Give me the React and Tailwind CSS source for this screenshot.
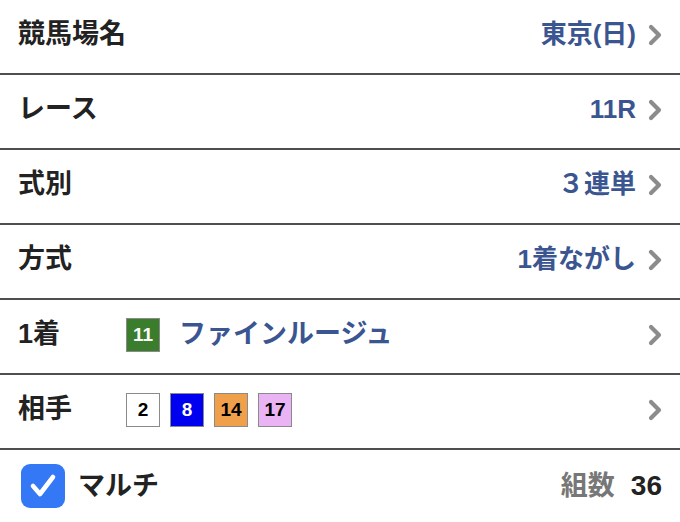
import React from "react";

const font = { fontFamily: '"Liberation Sans", "Noto Sans CJK JP", sans-serif' };

function Chevron() {
  return (
    <svg width="16" height="22" viewBox="0 0 16 22" className="shrink-0">
      <polyline points="4,3 12,11 4,19" fill="none" stroke="#8c8c8c" strokeWidth="4.2" strokeLinecap="round" strokeLinejoin="round" />
    </svg>
  );
}

function Num({ n, cls }) {
  return (
    <div className={`w-[34px] h-[34px] flex items-center justify-center border-[1.5px] border-[#8a8a8a] text-[19px] font-bold leading-none ${cls}`}>
      {n}
    </div>
  );
}

function Row({ children, last }) {
  return (
    <div className={`flex items-center pl-[18px] pr-[17px] ${last ? "h-[72px]" : "h-[75px] pb-[4px] border-b-2 border-[#4e4e4e]"}`}>
      {children}
    </div>
  );
}

const rows = [
  { label: "競馬場名", value: "東京(日)" },
  { label: "レース", value: "11R" },
  { label: "式別", value: "３連単" },
  { label: "方式", value: "1着ながし" },
];

export default function App() {
  return (
    <div className="w-[680px] h-[522px] bg-white text-[#222] overflow-hidden" style={font}>
      {rows.map((r) => (
        <Row key={r.label}>
          <div className="text-[27px] font-bold">{r.label}</div>
          <div className="ml-auto flex items-center gap-[11px]">
            <span className="text-[26px] font-bold text-[#3b5590]">{r.value}</span>
            <Chevron />
          </div>
        </Row>
      ))}

      <Row>
        <div className="w-[108px] text-[27px] font-bold">1着</div>
        <Num n="11" cls="bg-[#3a7d2c] text-white" />
        <span className="ml-[19px] text-[27px] font-bold text-[#3b5590]">ファインルージュ</span>
        <div className="ml-auto">
          <Chevron />
        </div>
      </Row>

      <Row>
        <div className="w-[108px] text-[27px] font-bold">相手</div>
        <div className="flex items-center gap-[10px]">
          <Num n="2" cls="bg-white text-black" />
          <Num n="8" cls="bg-[#0000f0] text-white" />
          <Num n="14" cls="bg-[#f0a04a] text-black" />
          <Num n="17" cls="bg-[#eab4f4] text-black" />
        </div>
        <div className="ml-auto">
          <Chevron />
        </div>
      </Row>

      <Row last>
        <div className="ml-[3px] w-[44px] h-[44px] rounded-[9px] bg-[#3478f6] flex items-center justify-center">
          <svg width="32" height="32" viewBox="0 0 32 32">
            <polyline points="6,16 13,24 26,7" fill="none" stroke="white" strokeWidth="4.6" strokeLinecap="round" strokeLinejoin="round" />
          </svg>
        </div>
        <span className="ml-[13px] text-[27px] font-bold">マルチ</span>
        <div className="ml-auto flex items-center gap-[16px] pr-[1px]">
          <span className="text-[27px] font-bold text-[#777]">組数</span>
          <span className="text-[28px] font-bold text-[#222]">36</span>
        </div>
      </Row>
    </div>
  );
}
